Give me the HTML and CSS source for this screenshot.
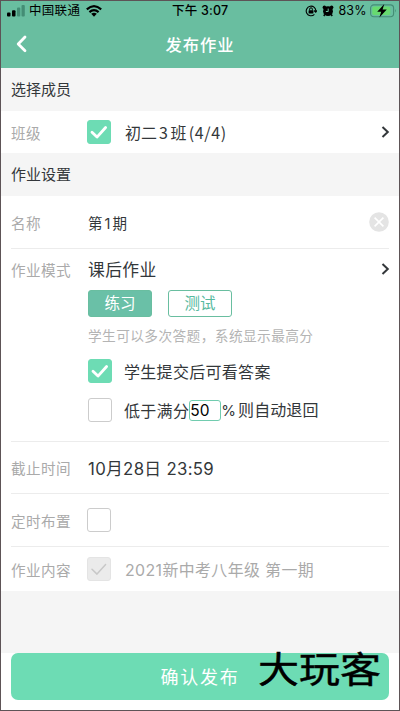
FILE: index.html
```html
<!DOCTYPE html>
<html lang="zh-CN">
<head>
<meta charset="utf-8">
<title>发布作业</title>
<link rel="stylesheet" href="styles.css">
</head>
<body>
<div class="screen">
  <header class="header">
    <div class="status">
      <div class="carrier">
        <svg width="18" height="12" viewBox="0 0 18 12"><rect x="0" y="7.5" width="3.5" height="4" rx="1"/><rect x="5" y="5.3" width="3.5" height="6.2" rx="1"/><g fill="#448d75"><rect x="10" y="2.5" width="3.3" height="9" rx="1"/><rect x="14.5" y="0" width="3.3" height="11.5" rx="1"/></g></svg>
        <span class="carrier-name">中国联通</span>
        <svg width="16" height="12" viewBox="0 0 16 12"><g fill="none" stroke="#000" stroke-width="2.1"><path d="M.8 4.4Q8-2 15.2 4.4M3.4 7.1Q8 3 12.6 7.1"/></g><path d="M5.2 8.8Q8 6.6 10.8 8.8L8 11.7z"/></svg>
      </div>
      <div class="time">下午 3:07</div>
      <div class="power">
        <svg class="lock" width="12" height="12" viewBox="0 0 12 12"><path d="M9.4 9.4A4.8 4.8 0 1 1 10.8 6.5M9 5.5l1.7 1.7L12 5.5" fill="none" stroke="#000" stroke-width="1.1"/><rect x="3.6" y="5.2" width="4.8" height="3.4" rx=".5"/><path d="M4.6 5.4V4.2a1.4 1.4 0 0 1 2.8 0v1.2" fill="none" stroke="#000"/></svg>
        <svg class="alarm" width="12" height="12" viewBox="0 0 12 12"><circle cx="6" cy="6.2" r="4.9"/><circle cx="2.4" cy="2.4" r="1.8"/><circle cx="9.6" cy="2.4" r="1.8"/><path d="M2.8 9.4 1.8 11M9.2 9.4l1 1.6" stroke="#000" stroke-width="1.5"/><path d="M6.2 3.6v2.9H3.9" fill="none" stroke="#69bea0"/></svg>
        <span class="percent">83%</span>
        <svg width="27" height="14" viewBox="0 0 27 14"><rect x=".6" y=".9" width="23" height="11.8" rx="3.2" fill="none" stroke="#448d75" stroke-width="1.1"/><rect x="2.3" y="2.6" width="18" height="8.4" rx="1.8" fill="#67da70"/><path d="M25 5q1.7 1.8 0 3.6z" fill="#448d75"/><path d="M14.3 0 7.2 7.7h4L9.4 13.6l7.4-8h-4.2z"/></svg>
      </div>
    </div>
    <div class="nav">
      <svg class="back" width="11" height="18" viewBox="0 0 11 18"><path d="M9 2 2.2 9 9 15.8" fill="none" stroke="#fff" stroke-width="2.8" stroke-linecap="round" stroke-linejoin="round"/></svg>
      <h1 class="title">发布作业</h1>
    </div>
  </header>

  <h2 class="section">选择成员</h2>
  <div class="row class-row">
    <span class="label">班级</span>
    <span class="box checked"><svg viewBox="0 0 24 24"><path d="m5 12.2 5 4.9L18.6 7.5"/></svg></span>
    <span class="value boxed-value class-name">初二<span class="num">3</span>班<span class="num">(4/4)</span></span>
    <svg class="arrow" width="9" height="12" viewBox="0 0 9 12"><path d="m1.5 1 5.3 5-5.3 5"/></svg>
  </div>
  <h2 class="section settings">作业设置</h2>

  <main class="form">
    <div class="row name-row">
      <span class="label">名称</span>
      <span class="value name-value">第<span class="one">1</span>期</span>
      <svg class="clear" width="20" height="20" viewBox="0 0 20 20"><circle cx="10" cy="10" r="9.8" fill="#e4e4e4"/><path d="m5.6 5.6 8.8 8.8m0-8.8-8.8 8.8" stroke="#fff" stroke-width="1.6"/></svg>
    </div>
    <div class="mode-row">
      <div class="row mode-head">
        <span class="label">作业模式</span>
        <span class="value mode-value">课后作业</span>
        <svg class="arrow" width="9" height="12" viewBox="0 0 9 12"><path d="m1.5 1 5.3 5-5.3 5"/></svg>
      </div>
      <div class="mode-body">
        <div class="tabs"><span class="tab active">练习</span><span class="tab">测试</span></div>
        <p class="hint">学生可以多次答题，系统显示最高分</p>
        <div class="option"><span class="box checked"><svg viewBox="0 0 24 24"><path d="m5 12.2 5 4.9L18.6 7.5"/></svg></span><span class="option-text">学生提交后可看答案</span></div>
        <div class="option second"><span class="box"></span><span class="option-text">低于满分</span><span class="score">50</span><span class="option-text rest"><span class="pct">%</span>则自动退回</span></div>
      </div>
    </div>
    <div class="row deadline-row">
      <span class="label">截止时间</span>
      <span class="value date"><span class="num">10</span>月<span class="num">28</span>日 <span class="num">23:59</span></span>
    </div>
    <div class="row timer-row">
      <span class="label">定时布置</span>
      <span class="box"></span>
    </div>
    <div class="row content-row">
      <span class="label">作业内容</span>
      <span class="box disabled"><svg viewBox="0 0 24 24"><path d="m5 12.2 5 4.9L18.6 7.5"/></svg></span>
      <span class="boxed-value content"><span class="num">2021</span>新中考八年级 第一期</span>
    </div>
  </main>
  <footer class="footer">
    <div class="submit">确认发布</div>
    <span class="brand">大玩客</span>
  </footer>
</div>
</body>
</html>
```

FILE: styles.css
```css
* { box-sizing: border-box; }
body { margin: 0; font-family: Inter, "Noto Sans CJK SC", sans-serif; }
svg { display: block; flex: none; }
.screen {
  width: 400px; height: 711px; border: 1px solid #5d5356;
  background: #f5f5f5; display: flex; flex-direction: column; overflow: hidden;
  white-space: nowrap; color: #33373a;
}
.header { height: 67px; flex: none; background: #69bea0; }
.status { height: 20px; display: grid; grid-template-columns: 171px 1fr 95px; align-items: center; color: #000; line-height: 20px; }
.carrier { display: flex; align-items: center; padding-left: 6px; }
.carrier-name { font-size: 12.5px; letter-spacing: .3px; margin: 0 6px 0 4px; font-weight: 400; }
.time { font-size: 12.5px; letter-spacing: .2px; font-weight: 500; }
.power { display: flex; align-items: center; }
.lock { margin-left: .5px; }
.alarm { margin-left: 5px; }
.percent { font-size: 12.5px; margin: 0 3px 0 5px; letter-spacing: .1px; }
.nav { height: 47px; display: grid; grid-template-columns: 1fr auto 1fr; align-items: center; }
.back { margin: -1px 0 0 15px; }
.title { margin: 1px 0 0; font-size: 16.3px; line-height: 24px; font-weight: 500; letter-spacing: 1px; color: #fff; }
.section { margin: 0; padding-left: 10px; height: 43px; flex: none; line-height: 43px; font-size: 15px; font-weight: 400; }
.settings { line-height: 44px; }
.class-row { height: 42px; flex: none; background: #fff; padding: 0 10px; }
.row { display: flex; align-items: center; }
.label { width: 77px; flex: none; font-size: 14.6px; letter-spacing: .4px; color: #aaa; }
.value { flex: 1; }
.box { width: 24px; height: 24px; flex: none; border: 1px solid #ccc; border-radius: 3px; background: #fff; }
.class-row .box, .timer-row .box, .content-row .box { margin-left: -1px; }
.box svg { width: 24px; height: 24px; margin: -1px; }
.box path { fill: none; stroke: #fff; stroke-width: 2.8; stroke-linecap: round; stroke-linejoin: round; }
.box.checked { background: #6ddcb4; border-color: #6ddcb4; }
.box.disabled { background: #ebebeb; border-color: #e4e4e4; }
.box.disabled path { stroke: #c8c8c8; stroke-width: 1.5; }
.boxed-value { margin-left: 14px; }
.class-name { font-size: 16px; }
.class-name .num { margin: 0 2px; font-family: "Noto Sans CJK SC", sans-serif; letter-spacing: .7px; }
.arrow path { fill: none; stroke: #33373a; stroke-width: 2; }
.arrow { margin-right: -1px; }
.form { background: #fff; padding: 0 10px; flex: none; height: 395px; }
.name-row { height: 53px; border-bottom: 1px solid #ececec; }
.name-value { font-size: 14.5px; }
.one { margin: 0 2px; }
.mode-row { height: 193px; border-bottom: 1px solid #ececec; }
.mode-head { height: 41px; padding-bottom: 1px; }
.mode-value { font-size: 16.8px; letter-spacing: .4px; }
.mode-body { padding-left: 77px; }
.tabs { display: flex; gap: 16px; }
.tab { width: 64px; height: 27px; border: 1px solid #69bea0; border-radius: 3px; line-height: 26px; text-align: center; font-size: 15.5px; color: #56b99e; }
.active { background: #6ac0a7; color: #fff; }
.hint { margin: 8px 0 12px; font-size: 13.7px; letter-spacing: .4px; line-height: 23px; height: 22px; color: #b4b4b4; }
.option { height: 24px; display: flex; align-items: center; line-height: 24px; }
.option .box { margin-right: 12px; }
.second { margin-top: 15px; }
.option-text { font-size: 16px; letter-spacing: .3px; position: relative; top: .6px; }
.score { width: 32px; height: 21px; border: 1px solid #71ccaf; border-radius: 3px; line-height: 20px; font-size: 15.5px; color: #000; }
.rest { letter-spacing: .1px; }
.pct { font-size: 15px; margin-right: 2px; }
.deadline-row { height: 52px; border-bottom: 1px solid #ececec; }
.date { font-size: 16.8px; letter-spacing: .3px; }
.timer-row { height: 53px; border-bottom: 1px solid #ececec; }
.content-row { height: 44px; }
.content { font-size: 15.9px; letter-spacing: .4px; color: #aaa; }
.footer { position: relative; margin-top: auto; height: 57px; background: #fff; padding: 0 10px; }
.submit { height: 47px; border-radius: 7px; background: #6ddcb4; color: #fff; text-align: center; line-height: 49px; font-size: 18px; letter-spacing: 1.7px; }
.brand { position: absolute; left: 257px; top: -8px; font-size: 41px; line-height: 48px; font-weight: 400; color: #000; -webkit-text-stroke: .5px #000; transform: scaleY(.9); }
```
